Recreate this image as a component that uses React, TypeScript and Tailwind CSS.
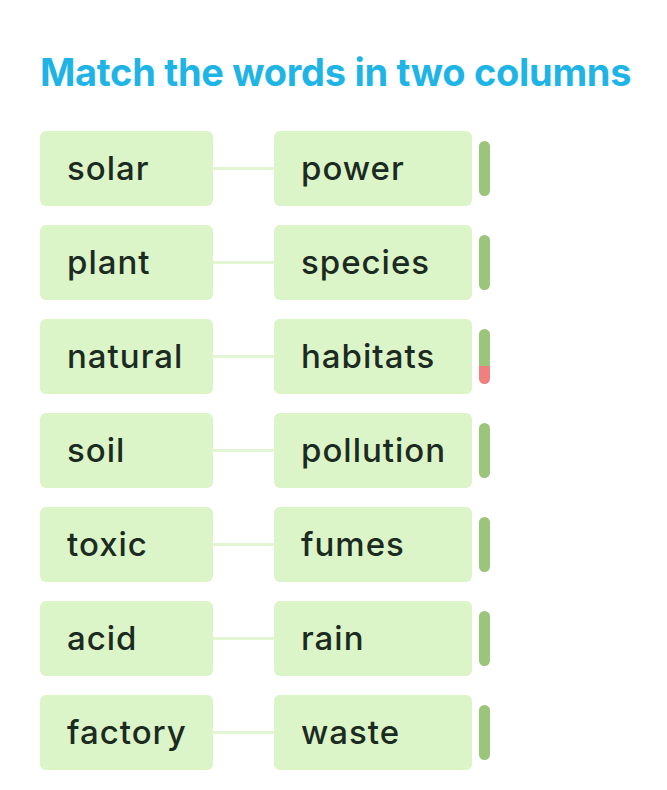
const pairs: { left: string; right: string; bad?: boolean }[] = [
  { left: 'solar', right: 'power' },
  { left: 'plant', right: 'species' },
  { left: 'natural', right: 'habitats', bad: true },
  { left: 'soil', right: 'pollution' },
  { left: 'toxic', right: 'fumes' },
  { left: 'acid', right: 'rain' },
  { left: 'factory', right: 'waste' },
];

export default function App() {
  return (
    <div className="w-[667px] h-[790px] bg-white font-['Inter',sans-serif] pl-10 pt-[48px]">
      <h1 className="text-[38px] font-bold text-[#1eb4e6] leading-[48px] tracking-[-0.3px]">
        Match the words in two columns
      </h1>
      <div className="mt-[35px] flex flex-col gap-[19px]">
        {pairs.map((p) => (
          <div key={p.left} className="flex items-center">
            <div className="w-[173px] h-[75px] bg-[#dcf5c8] rounded-md flex items-center pl-[27px] text-[33px] font-medium tracking-[1px] text-[#1c2b22]">
              {p.left}
            </div>
            <div className="w-[61px] h-[3px] bg-[#e3f6d4]" />
            <div className="w-[198px] h-[75px] bg-[#dcf5c8] rounded-md flex items-center pl-[27px] text-[33px] font-medium tracking-[1px] text-[#1c2b22]">
              {p.right}
            </div>
            <div className="ml-[7px] w-[11px] h-[55px] rounded-full overflow-hidden flex flex-col">
              <div className="flex-1 bg-[#9bc57a]" />
              {p.bad && <div className="h-[18px] bg-[#f07f7f]" />}
            </div>
          </div>
        ))}
      </div>
    </div>
  );
}
